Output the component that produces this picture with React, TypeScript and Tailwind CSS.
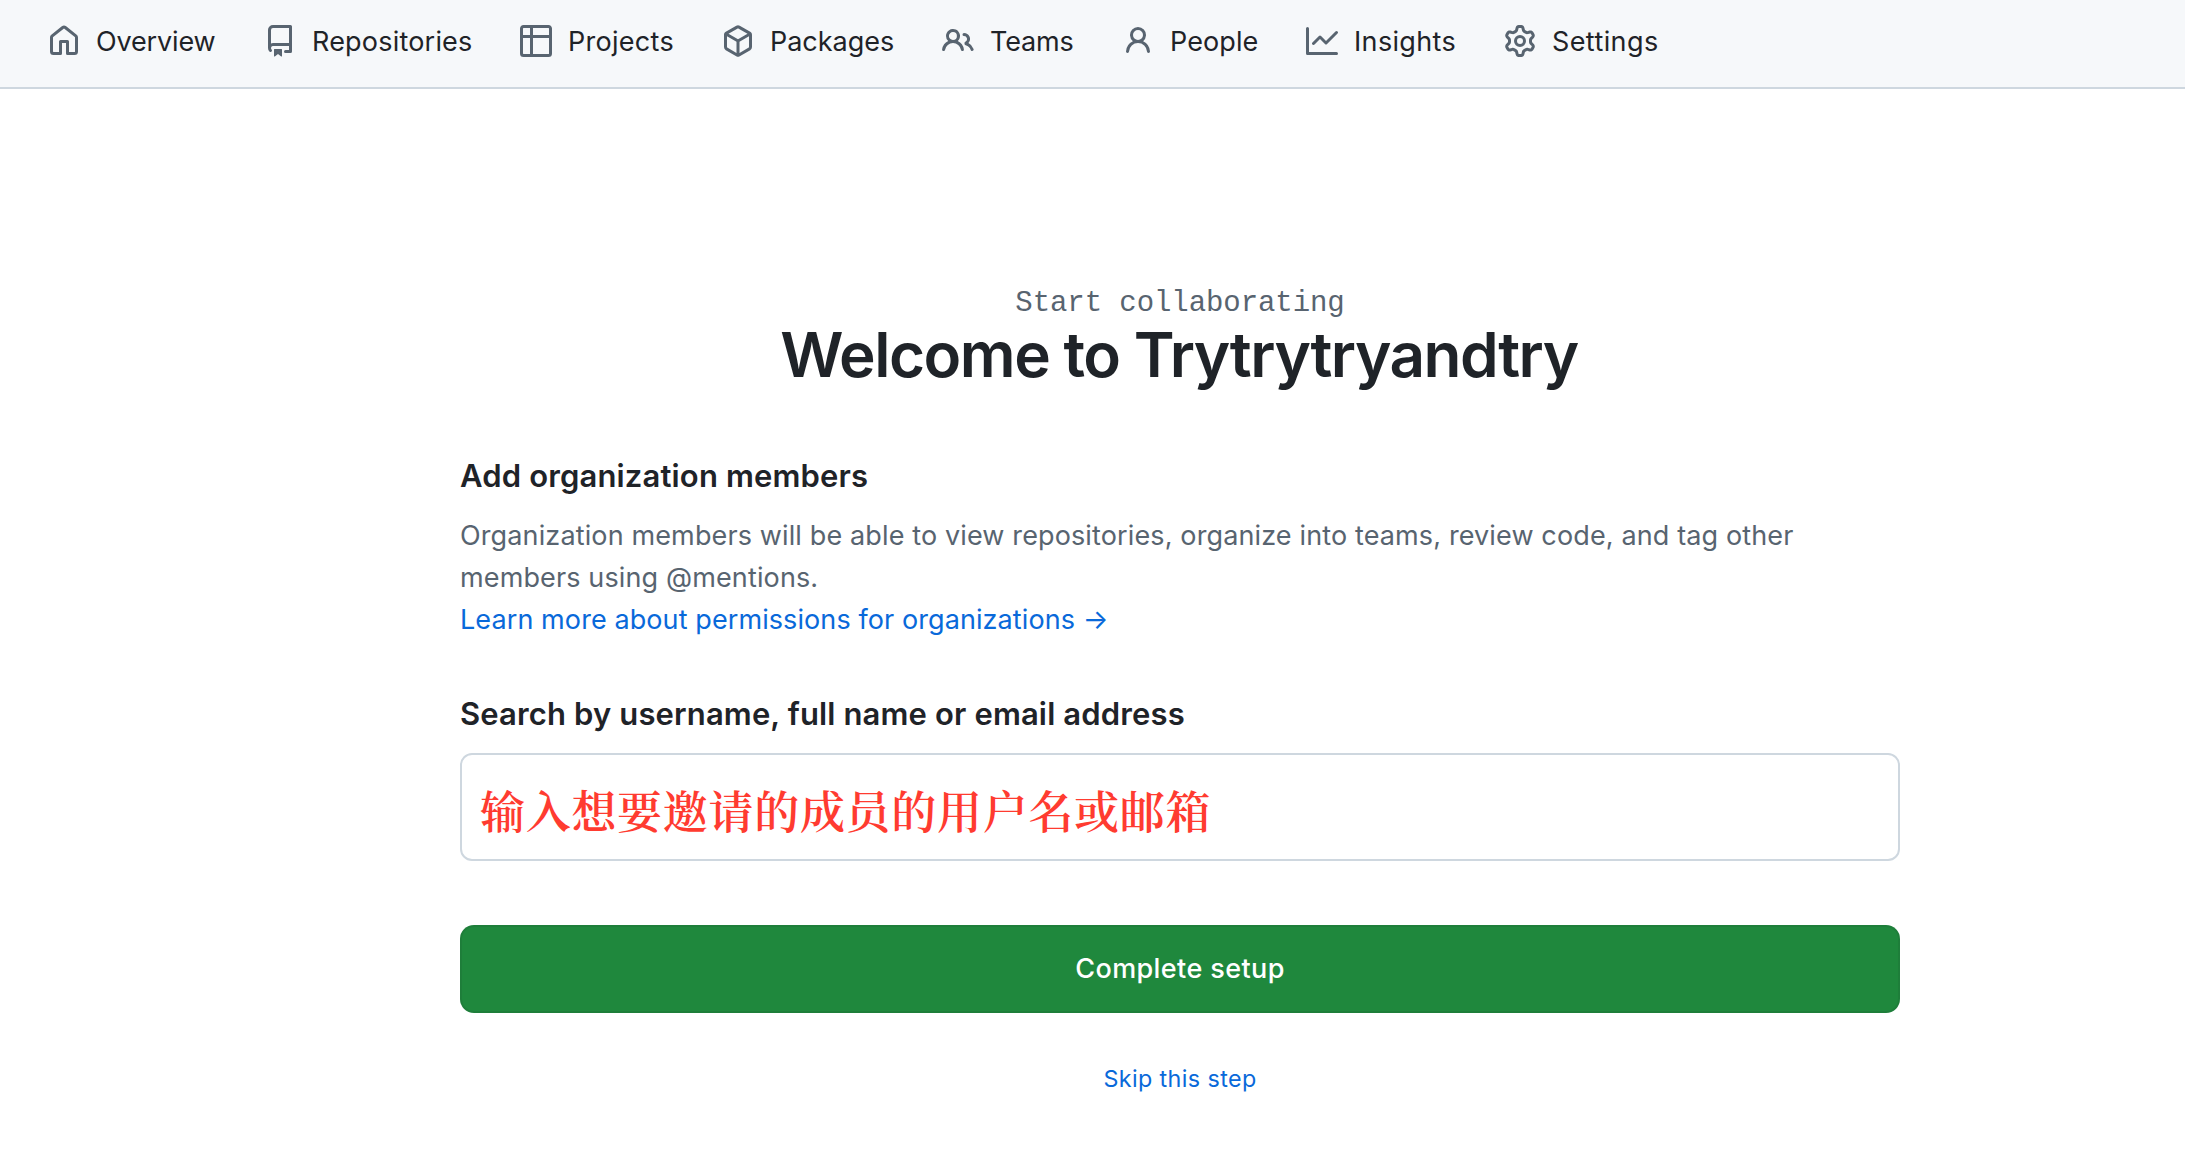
import React from 'react';

type NavItem = { label: string; slot: string; tracking: string; path: string };

const navItems: NavItem[] = [
  {
    label: 'Overview',
    slot: 'w-[216px]',
    tracking: 'tracking-[-0.15px]',
    path: 'M6.906.664a1.749 1.749 0 0 1 2.187 0l5.25 4.2c.415.332.657.835.657 1.367v7.019A1.75 1.75 0 0 1 13.25 15h-3.5a.75.75 0 0 1-.75-.75V9H7v5.25a.75.75 0 0 1-.75.75h-3.5A1.75 1.75 0 0 1 1 13.25V6.23c0-.531.242-1.034.657-1.366l5.25-4.2Zm1.25 1.171a.25.25 0 0 0-.312 0l-5.25 4.2a.25.25 0 0 0-.094.196v7.019c0 .138.112.25.25.25H5.5V8.25a.75.75 0 0 1 .75-.75h3.5a.75.75 0 0 1 .75.75v5.25h2.75a.25.25 0 0 0 .25-.25V6.23a.25.25 0 0 0-.094-.195Z',
  },
  {
    label: 'Repositories',
    slot: 'w-[256px]',
    tracking: 'tracking-[0.2px]',
    path: 'M2 2.5A2.5 2.5 0 0 1 4.5 0h8.75a.75.75 0 0 1 .75.75v12.5a.75.75 0 0 1-.75.75h-2.5a.75.75 0 0 1 0-1.5h1.75v-2h-8a1 1 0 0 0-.714 1.7.75.75 0 1 1-1.072 1.05A2.495 2.495 0 0 1 2 11.5Zm10.5-1h-8a1 1 0 0 0-1 1v6.708A2.486 2.486 0 0 1 4.5 9h8ZM5 12.25a.25.25 0 0 1 .25-.25h3.5a.25.25 0 0 1 .25.25v3.25a.25.25 0 0 1-.4.2l-1.45-1.087a.249.249 0 0 0-.3 0L5.4 15.7a.25.25 0 0 1-.4-.2Z',
  },
  {
    label: 'Projects',
    slot: 'w-[202px]',
    tracking: 'tracking-[0.28px]',
    path: 'M0 1.75C0 .784.784 0 1.75 0h12.5C15.216 0 16 .784 16 1.75v12.5A1.75 1.75 0 0 1 14.25 16H1.75A1.75 1.75 0 0 1 0 14.25ZM6.5 6.5v8h7.75a.25.25 0 0 0 .25-.25V6.5Zm8-1.5V1.75a.25.25 0 0 0-.25-.25H6.5V5Zm-13 1.5v7.75c0 .138.112.25.25.25H5v-8ZM5 5V1.5H1.75a.25.25 0 0 0-.25.25V5Z',
  },
  {
    label: 'Packages',
    slot: 'w-[220px]',
    tracking: 'tracking-[-0.02px]',
    path: 'm8.878.392 5.25 3.045c.54.314.872.89.872 1.514v6.098a1.75 1.75 0 0 1-.872 1.514l-5.25 3.045a1.75 1.75 0 0 1-1.756 0l-5.25-3.045A1.75 1.75 0 0 1 1 11.049V4.951c0-.624.332-1.201.872-1.514L7.122.392a1.75 1.75 0 0 1 1.756 0ZM7.875 1.69l-4.63 2.685L8 7.133l4.755-2.758-4.63-2.685a.248.248 0 0 0-.25 0ZM2.5 5.677v5.372c0 .09.047.171.125.216l4.625 2.683V8.432Zm6.25 8.271 4.625-2.683a.25.25 0 0 0 .125-.216V5.677L8.75 8.432Z',
  },
  {
    label: 'Teams',
    slot: 'w-[180px]',
    tracking: 'tracking-[-0.15px]',
    path: 'M2 5.5a3.5 3.5 0 1 1 5.898 2.549 5.508 5.508 0 0 1 3.034 4.084.75.75 0 1 1-1.482.235 4 4 0 0 0-7.9 0 .75.75 0 0 1-1.482-.236A5.507 5.507 0 0 1 3.102 8.05 3.493 3.493 0 0 1 2 5.5ZM11 4a3.001 3.001 0 0 1 2.22 5.018 5.01 5.01 0 0 1 2.56 3.012.749.749 0 0 1-.885.954.752.752 0 0 1-.549-.514 3.507 3.507 0 0 0-2.522-2.372.75.75 0 0 1-.574-.73v-.352a.75.75 0 0 1 .416-.672A1.5 1.5 0 0 0 11 5.5.75.75 0 0 1 11 4Zm-5.5-.5a2 2 0 1 0-.001 3.999A2 2 0 0 0 5.5 3.5Z',
  },
  {
    label: 'People',
    slot: 'w-[184px]',
    tracking: 'tracking-[0.08px]',
    path: 'M10.561 8.073a6.005 6.005 0 0 1 3.432 5.142.75.75 0 1 1-1.498.07 4.5 4.5 0 0 0-8.99 0 .75.75 0 0 1-1.498-.07 6.004 6.004 0 0 1 3.431-5.142 3.999 3.999 0 1 1 5.123 0ZM10.5 5a2.5 2.5 0 1 0-5 0 2.5 2.5 0 0 0 5 0Z',
  },
  {
    label: 'Insights',
    slot: 'w-[198px]',
    tracking: 'tracking-[0.34px]',
    path: 'M1.5 1.75V13.5h13.75a.75.75 0 0 1 0 1.5H.75a.75.75 0 0 1-.75-.75V1.75a.75.75 0 0 1 1.5 0Zm14.28 2.53-5.25 5.25a.75.75 0 0 1-1.06 0L7 7.06 4.28 9.78a.751.751 0 0 1-1.042-.018.751.751 0 0 1-.018-1.042l3.25-3.25a.75.75 0 0 1 1.06 0L10 7.94l4.72-4.72a.751.751 0 0 1 1.042.018.751.751 0 0 1 .018 1.042Z',
  },
  {
    label: 'Settings',
    slot: 'w-[200px]',
    tracking: 'tracking-[0.4px]',
    path: 'M8 0a8.2 8.2 0 0 1 .701.031C9.444.095 9.99.645 10.16 1.29l.288 1.107c.018.066.079.158.212.224.231.114.454.243.668.386.123.082.233.09.299.071l1.103-.303c.644-.176 1.392.021 1.82.63.27.385.506.792.704 1.218.315.675.111 1.422-.364 1.891l-.814.806c-.049.048-.098.147-.088.294.016.257.016.515 0 .772-.01.147.038.246.088.294l.814.806c.475.469.679 1.216.364 1.891a7.977 7.977 0 0 1-.704 1.217c-.428.61-1.176.807-1.82.63l-1.102-.302c-.067-.019-.177-.011-.3.071a5.909 5.909 0 0 1-.668.386c-.133.066-.194.158-.211.224l-.29 1.106c-.168.646-.715 1.196-1.458 1.26a8.006 8.006 0 0 1-1.402 0c-.743-.064-1.289-.614-1.458-1.26l-.289-1.106c-.018-.066-.079-.158-.212-.224a5.738 5.738 0 0 1-.668-.386c-.123-.082-.233-.09-.299-.071l-1.103.303c-.644.176-1.392-.021-1.82-.63a8.12 8.12 0 0 1-.704-1.218c-.315-.675-.111-1.422.363-1.891l.815-.806c.05-.048.098-.147.088-.294a6.214 6.214 0 0 1 0-.772c.01-.147-.038-.246-.088-.294l-.815-.806C.635 6.045.431 5.298.746 4.623a7.92 7.92 0 0 1 .704-1.217c.428-.61 1.176-.807 1.82-.63l1.102.302c.067.019.177.011.3-.071.214-.143.437-.272.668-.386.133-.066.194-.158.211-.224l.29-1.106C6.009.645 6.556.095 7.299.03 7.53.01 7.764 0 8 0Zm-.571 1.525c-.036.003-.108.036-.137.146l-.289 1.105c-.147.561-.549.967-.998 1.189-.173.086-.34.183-.5.29-.417.278-.97.423-1.529.27l-1.103-.303c-.109-.03-.175.016-.195.045-.22.312-.412.644-.573.99-.014.031-.021.11.059.19l.815.806c.411.406.562.957.53 1.456a4.709 4.709 0 0 0 0 .582c.032.499-.119 1.05-.53 1.456l-.815.806c-.081.08-.073.159-.059.19.162.346.353.677.573.989.02.03.085.076.195.046l1.102-.303c.56-.153 1.113-.008 1.53.27.161.107.328.204.501.29.447.222.85.629.997 1.189l.289 1.105c.029.109.101.143.137.146a6.6 6.6 0 0 0 1.142 0c.036-.003.108-.036.137-.146l.289-1.105c.147-.561.549-.967.998-1.189.173-.086.34-.183.5-.29.417-.278.97-.423 1.529-.27l1.103.303c.109.029.175-.016.195-.045.22-.313.411-.644.573-.99.014-.031.021-.11-.059-.19l-.815-.806c-.411-.406-.562-.957-.53-1.456a4.709 4.709 0 0 0 0-.582c-.032-.499.119-1.05.53-1.456l.815-.806c.081-.08.073-.159.059-.19a6.464 6.464 0 0 0-.573-.989c-.02-.03-.085-.076-.195-.046l-1.102.303c-.56.153-1.113.008-1.53-.27a4.44 4.44 0 0 0-.501-.29c-.447-.222-.85-.629-.997-1.189l-.289-1.105c-.029-.11-.101-.143-.137-.146a6.6 6.6 0 0 0-1.142 0ZM11 8a3 3 0 1 1-6 0 3 3 0 0 1 6 0ZM9.5 8a1.5 1.5 0 1 0-3.001.001A1.5 1.5 0 0 0 9.5 8Z',
  },
];

function OrgNav() {
  return (
    <nav className="flex h-[89px] items-center border-b-2 border-[#ced7df] bg-[#f6f8fa] pb-[5px] pl-12">
      {navItems.map((item) => (
        <a key={item.label} className={`flex shrink-0 items-center gap-4 ${item.slot}`}>
          <svg className="size-8 shrink-0 fill-[#586470]" viewBox="0 0 16 16" aria-hidden="true">
            <path d={item.path} />
          </svg>
          <span className={`pt-0.5 text-[27px] leading-10 whitespace-nowrap ${item.tracking}`}>{item.label}</span>
        </a>
      ))}
    </nav>
  );
}

export default function App() {
  return (
    <div className="h-[1153px] w-full overflow-hidden bg-white font-['Inter',sans-serif] text-[#1f2328]">
      <OrgNav />
      <main className="ml-[460px] flex w-[1440px] flex-col pt-[194px]">
        <p className="text-center font-['Liberation_Mono',monospace] text-[29px] leading-[41px] tracking-[-0.07px] text-[#586470]">
          Start collaborating
        </p>
        <h1 className="pr-0.5 text-center text-[62px] leading-[62px] font-semibold tracking-[-1.47px] whitespace-nowrap">
          Welcome to Trytrytryandtry
        </h1>

        <h2 className="mt-[66px] text-[31px] leading-[48px] font-semibold tracking-[0.15px]">
          Add organization members
        </h2>
        <p className="mt-[15px] text-[27px] leading-[42px] tracking-[0.13px] whitespace-nowrap text-[#586470]">
          Organization members will be able to view repositories, organize into teams, review code, and tag other
          <br />
          members using @mentions.
          <br />
          <a className="tracking-[0.09px] text-[#0969da]">Learn more about permissions for organizations →</a>
        </p>

        <label className="mt-[49px] text-[31px] leading-[48px] font-semibold tracking-[0.14px]">
          Search by username, full name or email address
        </label>
        <div className="mt-[15px] flex h-[108px] items-center rounded-xl border-2 border-[#ced7df] pt-1.5 pl-[18px] font-['Noto_Serif_CJK_SC',serif] text-[45px] leading-[60px] font-semibold tracking-[0.7px] text-[#ff3b30]">
          输入想要邀请的成员的用户名或邮箱
        </div>

        <button className="mt-16 h-[88px] rounded-[14px] border-2 border-[#1f2328]/10 bg-[#1f883d] bg-clip-border text-[27px] font-medium tracking-[0.4px] text-white">
          Complete setup
        </button>
        <a className="mt-12 self-center text-[23.3px] leading-9 tracking-[0.4px] text-[#0969da]">Skip this step</a>
      </main>
    </div>
  );
}
